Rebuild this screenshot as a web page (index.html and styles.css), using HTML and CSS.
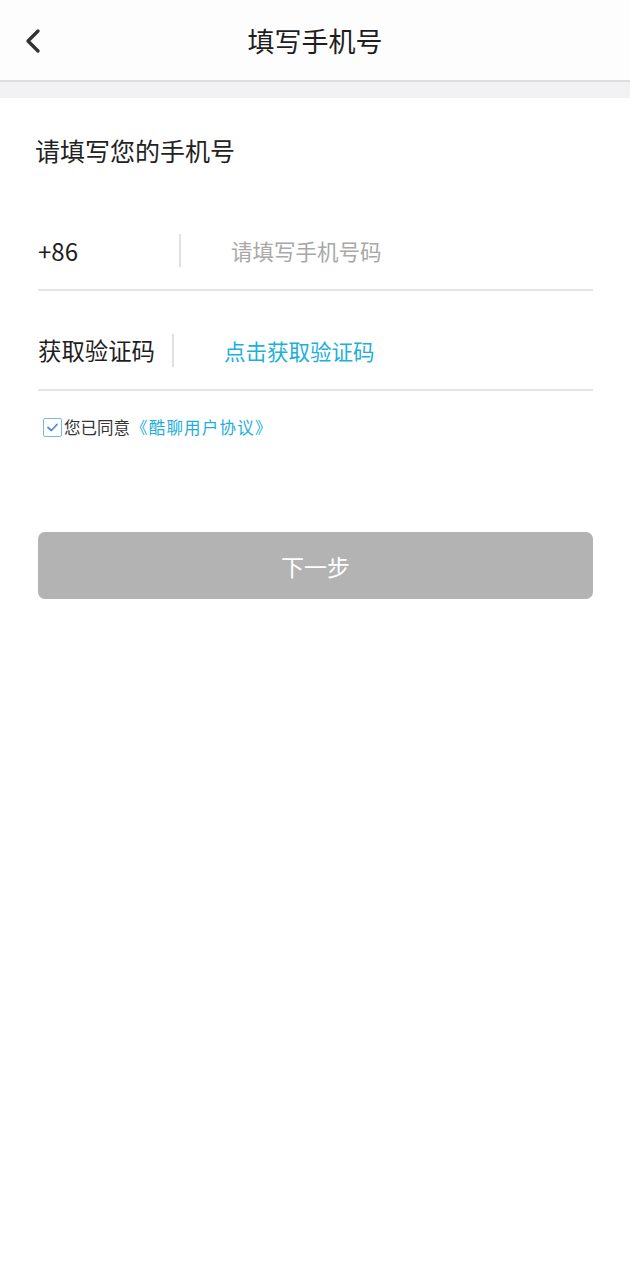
FILE: index.html
```html
<!DOCTYPE html>
<html lang="zh-CN">
<head>
<meta charset="utf-8">
<title>填写手机号</title>
<link rel="stylesheet" href="styles.css">
</head>
<body>
<header class="topbar">
  <span class="back">
    <svg width="18" height="26" viewBox="0 0 18 26"><path d="M14 3 L4 13 L14 23" fill="none" stroke="#333" stroke-width="3.4" stroke-linecap="round" stroke-linejoin="round"/></svg>
  </span>
  <h1 class="title">填写手机号</h1>
</header>
<div class="band"></div>
<main class="content">
  <div class="heading">请填写您的手机号</div>
  <div class="row">
    <span class="cc">+86</span>
    <span class="vline"></span>
    <span class="placeholder">请填写手机号码</span>
  </div>
  <div class="row">
    <span class="label">获取验证码</span>
    <span class="vline vline2"></span>
    <span class="getcode">点击获取验证码</span>
  </div>
  <div class="agree">
    <span class="check">
      <svg width="15" height="15" viewBox="0 0 15 15"><path d="M3 7.5 L6.3 10.5 L12 4.5" fill="none" stroke="#4e8fd6" stroke-width="1.8" stroke-linecap="round" stroke-linejoin="round"/></svg>
    </span>
    <span class="agree-text">您已同意</span><span class="agree-link">《酷聊用户协议》</span>
  </div>
  <button class="next">下一步</button>
</main>
</body>
</html>
```
FILE: styles.css
```css
* { box-sizing: border-box; }
html, body {
  margin: 0;
  padding: 0;
  background: #fff;
  font-family: "Noto Sans CJK SC", "Noto Sans", sans-serif;
  color: #222;
}
.topbar {
  height: 82px;
  display: flex;
  align-items: center;
  justify-content: center;
  position: relative;
  background: #fdfdfd;
  border-bottom: 2px solid #dedede;
}
.back {
  position: absolute;
  left: 24px;
  top: 28px;
  display: flex;
}
.title {
  margin: 0;
  font-size: 27px;
  font-weight: 400;
  color: #1e1e1e;
  line-height: 1;
}
.band {
  height: 16px;
  background: #f2f2f4;
}
.content {
  padding: 34px 37px 0 38px;
}
.heading {
  font-size: 25px;
  line-height: 36px;
  margin-left: -3px;
  color: #222;
}
.row {
  height: 100px;
  padding-top: 20px;
  display: flex;
  align-items: center;
  border-bottom: 2px solid #e3e3e3;
}
.content .heading + .row { margin-top: 23px; }
.cc {
  width: 141px;
  font-size: 24px;
  color: #1e1e1e;
}
.vline {
  width: 2px;
  height: 33px;
  background: #e0e0e0;
  margin-right: 50px;
}
.vline2 { margin-left: 17px; }
.placeholder {
  font-size: 21.5px;
  color: #a8a8a8;
}
.label {
  font-size: 23.4px;
  color: #1e1e1e;
}
.getcode {
  font-size: 21.5px;
  color: #1cb0da;
}
.agree {
  margin-top: 25px;
  display: flex;
  align-items: center;
  padding-left: 5px;
  height: 22px;
}
.check {
  width: 19px;
  height: 19px;
  border: 1.5px solid #7cb6e2;
  border-radius: 2px;
  display: flex;
  align-items: center;
  justify-content: center;
  margin-right: 2px;
}
.agree-text {
  font-size: 16.5px;
  color: #333;
}
.agree-link {
  font-size: 16.5px;
  letter-spacing: 1.2px;
  color: #22aedc;
  margin-left: 1px;
}
.next {
  display: block;
  margin-top: 94px;
  width: 555px;
  height: 67px;
  border: none;
  border-radius: 7px;
  background: #b3b3b3;
  color: #fff;
  font-family: "Noto Sans CJK SC", sans-serif;
  font-size: 23px;
}
```
